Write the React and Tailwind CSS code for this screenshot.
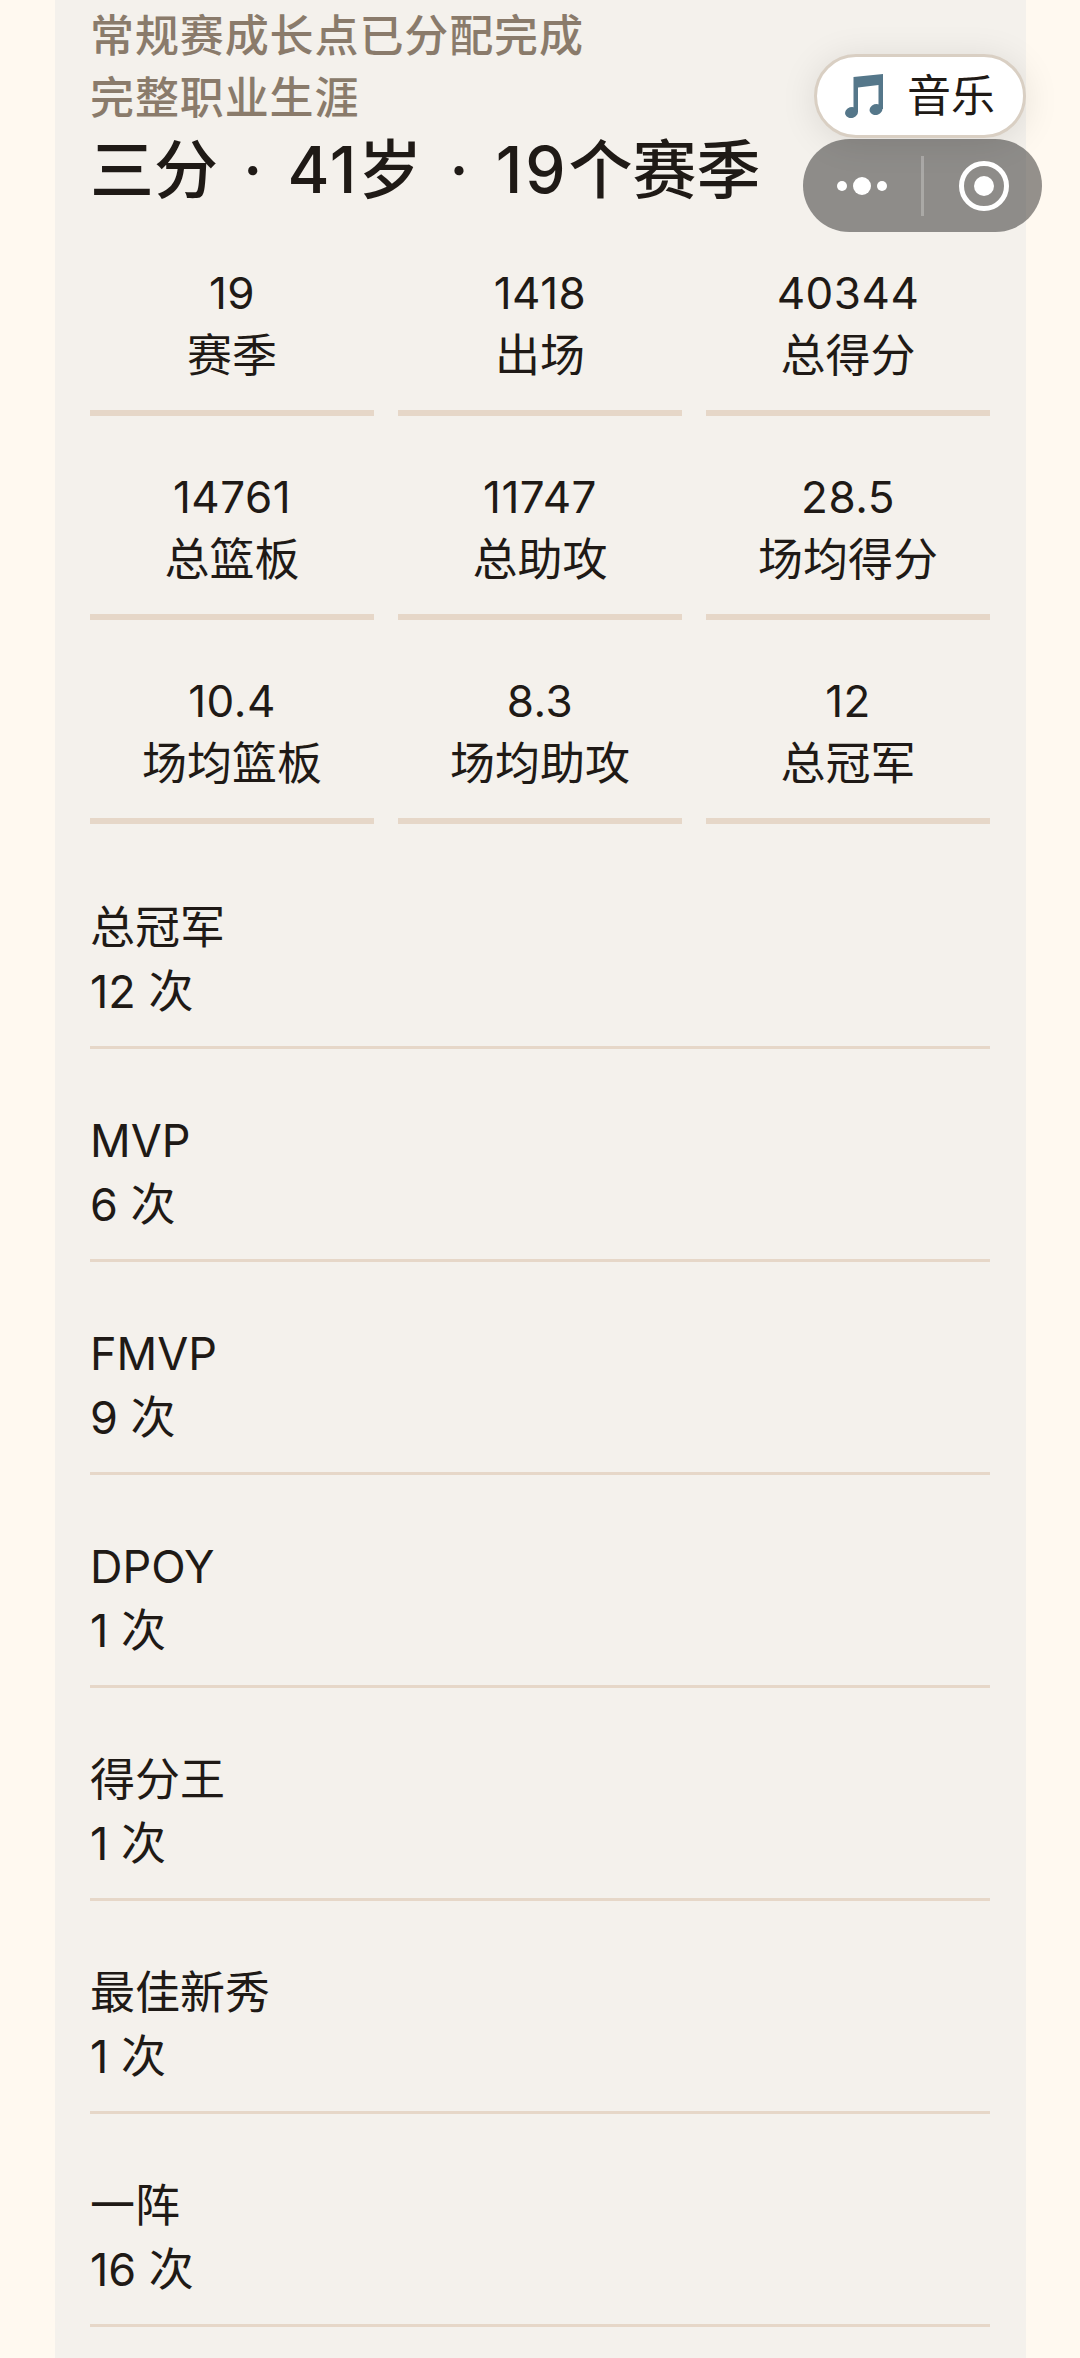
const stats = [
  { value: '19', label: '赛季' },
  { value: '1418', label: '出场' },
  { value: '40344', label: '总得分' },
  { value: '14761', label: '总篮板' },
  { value: '11747', label: '总助攻' },
  { value: '28.5', label: '场均得分' },
  { value: '10.4', label: '场均篮板' },
  { value: '8.3', label: '场均助攻' },
  { value: '12', label: '总冠军' },
];

const honors = [
  { name: '总冠军', count: '12 次' },
  { name: 'MVP', count: '6 次' },
  { name: 'FMVP', count: '9 次' },
  { name: 'DPOY', count: '1 次' },
  { name: '得分王', count: '1 次' },
  { name: '最佳新秀', count: '1 次' },
  { name: '一阵', count: '16 次' },
];

const NoteIcon = () => (
  <svg width="38" height="45" viewBox="0 0 38 45" fill="#55778a">
    <path d="M8.5 3 L38 0 V35 H33.5 V11 L13 13.5 V38 H8.5 Z" />
    <ellipse cx="6.5" cy="38.5" rx="6.5" ry="5.5" transform="rotate(-18 6.5 38.5)" />
    <ellipse cx="31" cy="35.5" rx="6.5" ry="5.5" transform="rotate(-18 31 35.5)" />
  </svg>
);

const App = () => {
  return (
    <div className="relative h-[2358px] w-[1080px] overflow-hidden bg-[#fff9f0] font-['Inter','Noto_Sans_CJK_SC',sans-serif] text-[#1f1a16]">
      <div className="ml-[55px] h-full w-[971px] bg-[#f4f1ec] pt-[5px] pr-[36px] pl-[35px]">
        <div className="text-[44px] leading-[62px] font-medium tracking-[0.9px] text-[#8a7b6b]">常规赛成长点已分配完成</div>
        <div className="text-[44px] leading-[62px] font-medium tracking-[0.9px] text-[#8a7b6b]">完整职业生涯</div>
        <div className="mt-[1px] text-[64px] leading-[80px] font-medium">
          三分<span className="mx-[25px]">·</span>
          <span className="tracking-[2px]">41</span>岁<span className="mx-[27px]">·</span>
          <span className="tracking-[3px]">19</span>个赛季
        </div>

        <div className="mt-[52px] grid grid-cols-3 gap-x-6 gap-y-[50px]">
          {stats.map((stat) => (
            <div key={stat.label} className="border-b-[6px] border-[#e6d7c8] pb-[23px] text-center leading-[62px]">
              <div className="text-[44px] tracking-[0.5px]">{stat.value}</div>
              <div className="mt-[1px] text-[45px]">{stat.label}</div>
            </div>
          ))}
        </div>

        <div className="mt-[12px]">
          {honors.map((honor) => (
            <div key={honor.name} className="border-b-[3px] border-[#e6d7c8] pt-[60px] pb-[22px] text-[45px] leading-[64px]">
              <div>{honor.name}</div>
              <div>{honor.count}</div>
            </div>
          ))}
        </div>
      </div>

      <div className="absolute top-[54px] left-[814px] flex h-[84px] w-[212px] items-center justify-center gap-[24px] rounded-full border-[3px] border-[#d9cfc3] bg-white shadow-[0_4px_36px_rgba(0,0,0,0.1)]">
        <NoteIcon />
        <span className="text-[44px] leading-none">音乐</span>
      </div>

      <div className="absolute top-[139px] left-[803px] flex h-[93px] w-[239px] items-center rounded-full bg-black/[0.42]">
        <div className="flex w-[118px] items-center justify-center gap-[6px]">
          <span className="h-[10px] w-[10px] rounded-full bg-white" />
          <span className="h-[18px] w-[18px] rounded-full bg-white" />
          <span className="h-[10px] w-[10px] rounded-full bg-white" />
        </div>
        <div className="h-[60px] w-[3px] bg-white/25" />
        <div className="flex flex-1 items-center justify-center pl-[2px]">
          <div className="flex h-[50px] w-[50px] items-center justify-center rounded-full border-[5px] border-white">
            <span className="h-[20px] w-[20px] rounded-full bg-white" />
          </div>
        </div>
      </div>
    </div>
  );
};

export default App;
